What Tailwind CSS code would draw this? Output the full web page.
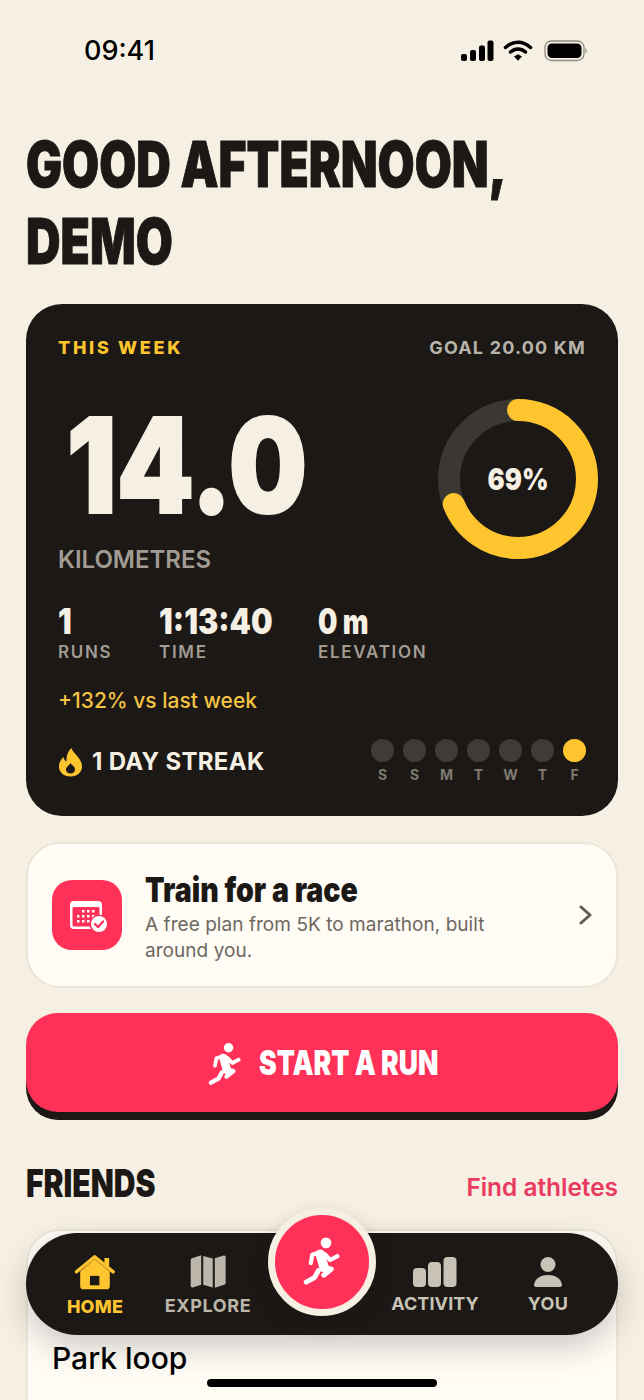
<!DOCTYPE html>
<html lang="en">
<head>
<meta charset="utf-8">
<title>Home</title>
<script src="https://cdn.jsdelivr.net/npm/@tailwindcss/browser@4"></script>
</head>
<body class="m-0">
<div class="relative w-[644px] h-[1400px] overflow-hidden bg-[#f6efe3] font-['Inter',sans-serif] text-[#1c1815]">

  <!-- status bar -->
  <div class="flex items-center justify-between h-[26px] mt-[38px] pl-[84px] pr-[57px]">
    <span class="text-[27px] leading-[26px] font-medium text-black">09:41</span>
    <svg width="126" height="24" viewBox="0 0 126 24" class="block">
      <rect x="0" y="15" width="6" height="7" rx="2" fill="#000"/>
      <rect x="9" y="11" width="6" height="11" rx="2" fill="#000"/>
      <rect x="18" y="6.500" width="6" height="15.500" rx="2" fill="#000"/>
      <rect x="26.500" y="1.500" width="6" height="20.500" rx="2" fill="#000"/>
      <path d="M44.500 8.500 C52 1.500 62 1.500 69.500 8.500" fill="none" stroke="#000" stroke-width="3.500" stroke-linecap="round"/>
      <path d="M49.500 13 C54 9 60 9 64.500 13" fill="none" stroke="#000" stroke-width="3.500" stroke-linecap="round"/>
      <path d="M53 17.500 L57 15.300 L61 17.500 L57 21.800 Z" fill="#000"/>
      <rect x="84" y="2" width="39" height="19.500" rx="6.500" fill="none" stroke="#8f8b84" stroke-width="1.300"/>
      <rect x="86.500" y="4.500" width="34" height="14.500" rx="4.500" fill="#000"/>
      <path d="M124.500 9 C126 9.500 126 14 124.500 14.500 Z" fill="#8f8b84"/>
    </svg>
  </div>

  <div class="px-[26px]">
    <!-- heading -->
    <h1 class="mt-[62px] w-[680px] origin-left scale-x-[.76] font-black text-[63px] leading-[77px] text-[#1c1815] [-webkit-text-stroke:1px_#1c1815]">GOOD AFTERNOON,<br>DEMO</h1>

    <!-- week card -->
    <section class="mt-[24px] h-[512px] rounded-[36px] bg-[#1c1815] pt-[33px] px-[32px] flex flex-col">
      <div class="flex items-center justify-between h-[22px]">
        <span class="text-[18px] leading-[22px] font-extrabold tracking-[2.7px] text-[#ffc52f]">THIS WEEK</span>
        <span class="text-[18px] leading-[22px] font-bold tracking-[1.200px] text-[#b8b3a9]">GOAL 20.00 KM</span>
      </div>

      <div class="relative h-[216px]">
        <div class="pt-[40px] pl-[10px] font-black text-[132px] leading-[132px] text-[#f6efe3] w-[360px] origin-left scale-x-[.84] [-webkit-text-stroke:2px_#f6efe3]">14.0</div>
        <div class="mt-[14px] text-[24px] leading-[30px] font-semibold text-[#a19c93]">KILOMETRES</div>
        <div class="absolute right-[-12px] top-[40px] w-[160px] h-[160px]">
          <svg width="160" height="160" viewBox="0 0 160 160" class="block">
            <circle cx="80" cy="80" r="69" fill="none" stroke="#3b3733" stroke-width="22"/>
            <circle cx="80" cy="80" r="69" fill="none" stroke="#ffc52f" stroke-width="22" stroke-linecap="round" stroke-dasharray="299 434" transform="rotate(-90 80 80)"/>
          </svg>
          <div class="absolute inset-0 flex items-center justify-center font-black text-[30px] leading-[31px] text-[#f6efe3] scale-x-[.85]">69%</div>
        </div>
      </div>

      <div class="mt-[28px] flex items-start">
        <div class="w-[101px]">
          <div class="font-black text-[35px] leading-[36px] text-[#f6efe3] origin-left scale-x-[.87]">1</div>
          <div class="mt-[3px] text-[17px] leading-[20px] font-semibold tracking-[1.700px] text-[#a19c93]">RUNS</div>
        </div>
        <div class="w-[159px]">
          <div class="font-black text-[35px] leading-[36px] text-[#f6efe3] origin-left scale-x-[.87] whitespace-nowrap">1:13:40</div>
          <div class="mt-[3px] text-[17px] leading-[20px] font-semibold tracking-[1.700px] text-[#a19c93]">TIME</div>
        </div>
        <div>
          <div class="font-black text-[35px] leading-[36px] text-[#f6efe3] origin-left scale-x-[.78]">0 m</div>
          <div class="mt-[3px] text-[17px] leading-[20px] font-semibold tracking-[1.700px] text-[#a19c93]">ELEVATION</div>
        </div>
      </div>

      <div class="mt-[26px] text-[21px] leading-[26px] font-medium text-[#f5c344]">+132% vs last week</div>

      <div class="mt-[25px] flex items-start justify-between">
        <div class="flex items-center gap-[9px] mt-[8px]">
          <svg width="25" height="30" viewBox="0 0 25 30" class="block">
            <path d="M13.500 1 C14.500 6 24 11 24 19.500 C24 25.500 19 29.500 12.500 29.500 C6 29.500 1 25.500 1 19.500 C1 15 3.500 12 5.500 10 C6 12.500 7 14 8.500 14.500 C8 9.500 10 4 13.500 1 Z" fill="#ffc52f"/>
            <path d="M12.500 16 C14 18.500 17 19.500 17 22.500 C17 25 15 26.500 12.500 26.500 C10 26.500 8 25 8 22.500 C8 20 11 18.500 12.500 16 Z" fill="#1c1815"/>
          </svg>
          <span class="text-[24px] leading-[30px] font-bold tracking-[.3px] text-[#f6efe3]">1 DAY STREAK</span>
        </div>
        <div class="flex gap-[9px]">
          <div class="flex flex-col items-center gap-[5px] w-[23px]"><span class="w-[23px] h-[23px] rounded-full bg-[#3f3b37]"></span><span class="text-[14px] leading-[16px] font-bold text-[#7e7a72]">S</span></div>
          <div class="flex flex-col items-center gap-[5px] w-[23px]"><span class="w-[23px] h-[23px] rounded-full bg-[#3f3b37]"></span><span class="text-[14px] leading-[16px] font-bold text-[#7e7a72]">S</span></div>
          <div class="flex flex-col items-center gap-[5px] w-[23px]"><span class="w-[23px] h-[23px] rounded-full bg-[#3f3b37]"></span><span class="text-[14px] leading-[16px] font-bold text-[#7e7a72]">M</span></div>
          <div class="flex flex-col items-center gap-[5px] w-[23px]"><span class="w-[23px] h-[23px] rounded-full bg-[#3f3b37]"></span><span class="text-[14px] leading-[16px] font-bold text-[#7e7a72]">T</span></div>
          <div class="flex flex-col items-center gap-[5px] w-[23px]"><span class="w-[23px] h-[23px] rounded-full bg-[#3f3b37]"></span><span class="text-[14px] leading-[16px] font-bold text-[#7e7a72]">W</span></div>
          <div class="flex flex-col items-center gap-[5px] w-[23px]"><span class="w-[23px] h-[23px] rounded-full bg-[#3f3b37]"></span><span class="text-[14px] leading-[16px] font-bold text-[#7e7a72]">T</span></div>
          <div class="flex flex-col items-center gap-[5px] w-[23px]"><span class="w-[23px] h-[23px] rounded-full bg-[#ffc52f]"></span><span class="text-[14px] leading-[16px] font-bold text-[#7e7a72]">F</span></div>
        </div>
      </div>
    </section>

    <!-- train card -->
    <section class="mt-[26px] h-[146px] rounded-[34px] border-2 border-[#ece5d8] bg-[#fffbf5] flex items-center pl-[24px] pr-[22px]">
      <div class="w-[70px] h-[70px] shrink-0 rounded-[20px] bg-[#ff3158] flex items-center justify-center">
        <svg width="40" height="32" viewBox="0 0 40 32" class="block translate-x-[2px] translate-y-[2px]">
          <rect x="1" y="0" width="32" height="28" rx="4" fill="#fff"/>
          <rect x="3.500" y="6" width="27" height="19.500" rx="1.500" fill="#ff3158"/>
          <g fill="#fff">
            <rect x="13" y="9" width="2.500" height="2.500"/><rect x="18" y="9" width="2.500" height="2.500"/><rect x="23" y="9" width="2.500" height="2.500"/>
            <rect x="8" y="14" width="2.500" height="2.500"/><rect x="13" y="14" width="2.500" height="2.500"/><rect x="18" y="14" width="2.500" height="2.500"/><rect x="23" y="14" width="2.500" height="2.500"/>
            <rect x="8" y="19" width="2.500" height="2.500"/><rect x="13" y="19" width="2.500" height="2.500"/><rect x="18" y="19" width="2.500" height="2.500"/>
          </g>
          <circle cx="30" cy="23" r="9.500" fill="#ff3158"/>
          <circle cx="30" cy="23" r="8" fill="#fff"/>
          <path d="M26 23 L29 26 L34 20.500" fill="none" stroke="#ff3158" stroke-width="2.400" stroke-linecap="round" stroke-linejoin="round"/>
        </svg>
      </div>
      <div class="ml-[23px] flex-1 mt-[4px]">
        <div class="w-[360px] origin-left scale-x-[.84] font-black text-[34px] leading-[38px] text-[#1c1815]">Train for a race</div>
        <div class="mt-[3px] text-[19px] leading-[26px] tracking-[.05px] text-[#6d6861] w-[370px]">A free plan from 5K to marathon, built around you.</div>
      </div>
      <svg width="16" height="20" viewBox="0 0 16 20" class="block shrink-0">
        <path d="M3 2 L12 10 L3 18" fill="none" stroke="#5f5b55" stroke-width="3" stroke-linecap="round" stroke-linejoin="round"/>
      </svg>
    </section>

    <!-- start run -->
    <button class="mt-[25px] w-full h-[99px] rounded-[32px] bg-[#ff3158] shadow-[0_8px_0_#1c1815] flex items-center justify-center gap-[16px] text-white">
      <svg width="36" height="44" viewBox="145 105 105 130" class="block">
        <circle cx="208" cy="125" r="14" fill="#fff"/>
        <g fill="none" stroke="#fff" stroke-linecap="round" stroke-linejoin="round">
          <path d="M193 155 L203 190" stroke-width="25"/>
          <path d="M190 150 L172 156 L168 178" stroke-width="11"/>
          <path d="M205 155 L219 170 L238 160" stroke-width="11"/>
          <path d="M188 198 L178 216 L156 228" stroke-width="13"/>
          <path d="M200 188 L222 194 L202 210" stroke-width="13"/>
        </g>
      </svg>
      <span class="w-[178px] font-black text-[34px] leading-[40px] whitespace-nowrap origin-left scale-x-[.78] text-left">START A RUN</span>
    </button>

    <!-- friends -->
    <div class="mt-[52px] flex items-center justify-between h-[38px]">
      <h2 class="font-black text-[38px] leading-[38px] origin-left scale-x-[.79] text-[#1c1815]">FRIENDS</h2>
      <a class="mt-[8px] text-[24.400px] leading-[30px] font-semibold text-[#ea3a60]">Find athletes</a>
    </div>

    <section class="mt-[27px] h-[300px] rounded-t-[34px] border-2 border-[#ece5d8] bg-[#fffbf5] pt-[109px] pl-[24px]">
      <div class="text-[30px] leading-[36px] font-medium text-black">Park loop</div>
    </section>
  </div>

  <!-- bottom nav -->
  <nav class="absolute left-[26px] top-[1233px] w-[592px] h-[102px] rounded-[51px] bg-[#1c1815] shadow-[0_12px_32px_rgba(28,24,21,.22)]">
    <div class="absolute left-[19px] top-[21px] w-[100px] flex flex-col items-center">
      <svg width="42" height="37" viewBox="225 310 122 110" class="block">
        <path d="M242 362 L285 325 L330 362 L330 405 Q330 415 320 415 L252 415 Q242 415 242 405 Z" fill="#ffc52f"/>
        <rect x="271" y="375" width="28" height="28" fill="#1c1815"/>
        <path d="M231 363 L285 318 L340 363" fill="none" stroke="#ffc52f" stroke-width="10" stroke-linecap="round" stroke-linejoin="round"/>
        <rect x="314" y="322" width="14" height="24" fill="#ffc52f"/>
      </svg>
      <span class="mt-[5px] text-[18px] leading-[22px] font-extrabold tracking-[.2px] text-[#ffc52f]">HOME</span>
    </div>
    <div class="absolute left-[122px] top-[22px] w-[120px] flex flex-col items-center">
      <svg width="36" height="33" viewBox="573 318 106 96" class="block">
        <path d="M575 332 Q575 327 581 326 L606 318 L606 405 L581 413 Q575 414 575 408 Z" fill="#bcb6ab"/>
        <path d="M612 320 L640 328 L640 413 L612 405 Z" fill="#bcb6ab"/>
        <path d="M646 327 L672 319 Q678 318 678 324 L678 400 Q678 404 672 406 L646 414 Z" fill="#bcb6ab"/>
      </svg>
      <span class="mt-[7px] text-[18px] leading-[22px] font-bold tracking-[.6px] text-[#bcb6ab]">EXPLORE</span>
    </div>
    <div class="absolute left-[349px] top-[24px] w-[120px] flex flex-col items-center">
      <svg width="44" height="30" viewBox="0 0 44 30" class="block">
        <rect x="0" y="11" width="13" height="19" rx="4" fill="#c8c2b7"/>
        <rect x="15" y="5" width="13" height="25" rx="4" fill="#c8c2b7"/>
        <rect x="30.500" y="0" width="13" height="30" rx="4" fill="#c8c2b7"/>
      </svg>
      <span class="mt-[6px] text-[18px] leading-[22px] font-bold tracking-[.1px] text-[#c8c2b7]">ACTIVITY</span>
    </div>
    <div class="absolute left-[482px] top-[24px] w-[80px] flex flex-col items-center">
      <svg width="28" height="30" viewBox="0 0 28 30" class="block">
        <circle cx="14" cy="7.500" r="7.500" fill="#c8c2b7"/>
        <path d="M0 28 C1 21 7 18 14 18 C21 18 27 21 28 28 Q28 30 26 30 L2 30 Q0 30 0 28 Z" fill="#c8c2b7"/>
      </svg>
      <span class="mt-[6px] text-[18px] leading-[22px] font-bold tracking-[.4px] text-[#c8c2b7]">YOU</span>
    </div>
    <div class="absolute left-[242px] top-[-25px] w-[108px] h-[108px] rounded-full bg-[#ff3158] border-[7px] border-[#f6efe3] shadow-[0_8px_20px_rgba(28,24,21,.2)] flex items-center justify-center">
      <svg width="40" height="50" viewBox="145 105 105 130" class="block -mt-[4px]">
        <circle cx="208" cy="125" r="14" fill="#fff"/>
        <g fill="none" stroke="#fff" stroke-linecap="round" stroke-linejoin="round">
          <path d="M193 155 L203 190" stroke-width="25"/>
          <path d="M190 150 L172 156 L168 178" stroke-width="11"/>
          <path d="M205 155 L219 170 L238 160" stroke-width="11"/>
          <path d="M188 198 L178 216 L156 228" stroke-width="13"/>
          <path d="M200 188 L222 194 L202 210" stroke-width="13"/>
        </g>
      </svg>
    </div>
  </nav>

  <!-- home indicator -->
  <div class="absolute left-[207px] top-[1379px] w-[230px] h-[8px] rounded-full bg-black"></div>
</div>
</body>
</html>
